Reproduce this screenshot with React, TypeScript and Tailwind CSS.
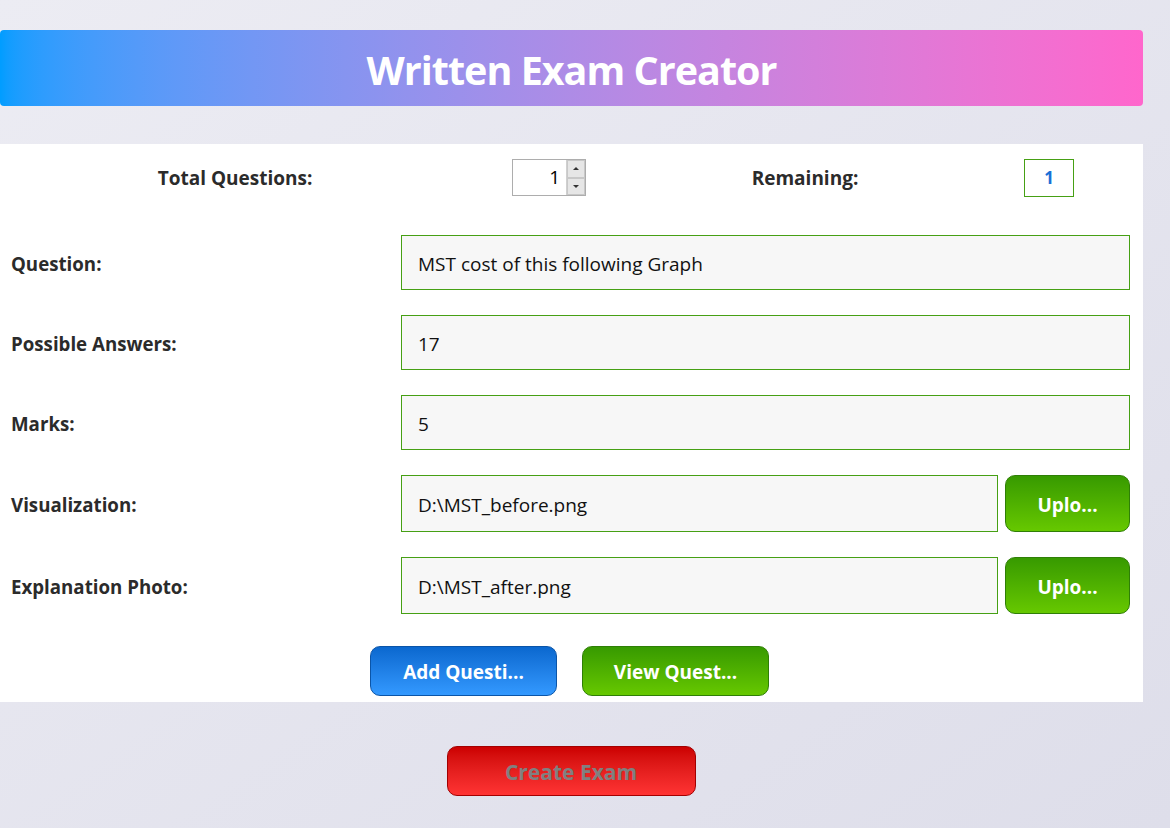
import React from 'react';

const font = { fontFamily: '"Open Sans", "Noto Sans", Arial, sans-serif' };

const Field = ({ label, value }: { label: string; value: string }) => (
  <div className="flex items-center h-[55px] mb-[25px]">
    <div className="w-[401px] pl-[11px] pt-[3px] text-[18.7px] font-bold text-[#2b2b2b]">{label}</div>
    <div className="w-[729px] h-full flex items-center px-4 pt-[3px] bg-[#f7f7f7] border border-[#46a014] text-[19px] text-[#111]">
      {value}
    </div>
  </div>
);

const FileField = ({ label, value }: { label: string; value: string }) => (
  <div className="flex items-center h-[57px] mb-[25px]">
    <div className="w-[401px] pl-[11px] pt-[3px] text-[18.7px] font-bold text-[#2b2b2b]">{label}</div>
    <div className="w-[597px] h-full flex items-center px-4 pt-[3px] bg-[#f7f7f7] border border-[#46a014] text-[19px] text-[#111]">
      {value}
    </div>
    <button className="ml-[7px] w-[125px] h-full pt-[3px] rounded-[10px] border border-[#2f7f06] bg-gradient-to-b from-[#379a00] to-[#66c800] text-white font-bold text-[19px]">
      Uplo...
    </button>
  </div>
);

export default function App() {
  return (
    <div style={font} className="w-[1170px] h-[828px] bg-gradient-to-br from-[#ececf3] to-[#dedeea] pt-[30px] overflow-hidden">
      {/* Header */}
      <div className="w-[1143px] h-[76px] rounded-[4px] bg-gradient-to-r from-[#009dff] to-[#ff66cc] flex items-center justify-center">
        <h1 className="text-white font-bold text-[39.5px] tracking-tight pt-[5px]">Written Exam Creator</h1>
      </div>

      {/* Form panel */}
      <div className="mt-[38px] w-[1143px] h-[558px] bg-white">
        <div className="flex items-center h-[67px]">
          <div className="w-[470px] pt-[2px] text-center text-[19px] font-bold text-[#2b2b2b]">Total Questions:</div>
          <div className="ml-[42px] w-[74px] h-[37px] flex border border-[#adadad] bg-white">
            <div className="flex-1 flex items-center justify-end pr-[6px] text-[19px] text-black">1</div>
            <div className="w-[19px] flex flex-col border-l border-[#d0d0d0]">
              <div className="flex-1 bg-[#e6e6e6] border border-[#c8c8c8] flex items-center justify-center">
                <div className="w-0 h-0 border-l-[3px] border-r-[3px] border-b-[3px] border-l-transparent border-r-transparent border-b-[#333]" />
              </div>
              <div className="flex-1 bg-[#e6e6e6] border border-[#c8c8c8] flex items-center justify-center">
                <div className="w-0 h-0 border-l-[3px] border-r-[3px] border-t-[3px] border-l-transparent border-r-transparent border-t-[#333]" />
              </div>
            </div>
          </div>
          <div className="w-[438px] pt-[2px] text-center text-[19px] font-bold text-[#2b2b2b]">Remaining:</div>
          <div className="w-[50px] h-[38px] border border-[#46a014] flex items-center justify-center text-[17px] font-bold text-[#1a6fd6]">
            1
          </div>
        </div>

        <div className="pt-[24px]">
          <Field label="Question:" value="MST cost of this following Graph" />
          <Field label="Possible Answers:" value="17" />
          <Field label="Marks:" value="5" />
          <FileField label="Visualization:" value="D:\MST_before.png" />
          <FileField label="Explanation Photo:" value="D:\MST_after.png" />
        </div>

        <div className="flex justify-center gap-[25px] mt-[32px] pr-[4px]">
          <button className="w-[187px] h-[50px] pt-[3px] rounded-[10px] border border-[#0b55a8] bg-gradient-to-b from-[#0a68cf] to-[#3399ff] text-white font-bold text-[19px]">
            Add Questi...
          </button>
          <button className="w-[187px] h-[50px] pt-[3px] rounded-[10px] border border-[#2f7f06] bg-gradient-to-b from-[#379a00] to-[#66c800] text-white font-bold text-[19px]">
            View Quest...
          </button>
        </div>
      </div>

      <div className="flex justify-center w-[1143px] mt-[44px]">
        <button className="ml-[-1px] w-[249px] h-[50px] pt-[3px] rounded-[10px] border border-[#a30000] bg-gradient-to-b from-[#cc0000] to-[#ff3333] text-[#808080] font-bold text-[21px]">
          Create Exam
        </button>
      </div>
    </div>
  );
}
